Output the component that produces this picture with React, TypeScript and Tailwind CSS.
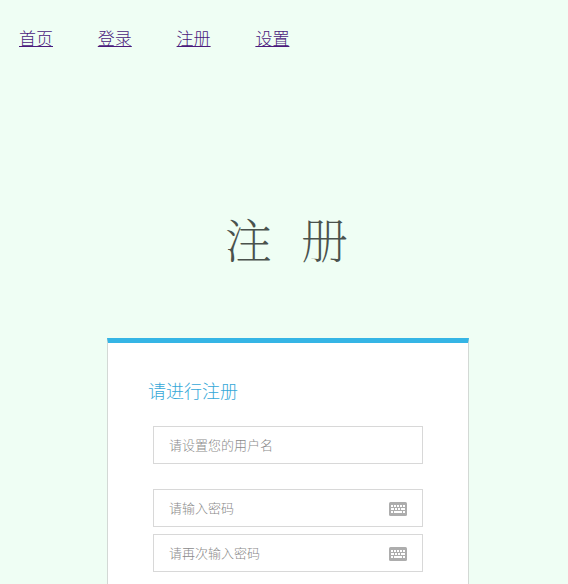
const navLinks = ["首页", "登录", "注册", "设置"];

function KeyboardIcon() {
  return (
    <svg className="mt-[2px]" width="18" height="14" viewBox="0 0 18 14">
      <rect width="18" height="14" rx="1.5" fill="#adadad" />
      <path
        d="M2 3h2v2H2zM5 3h2v2H5zM8 3h2v2H8zM11 3h2v2h-2zM14 3h2v2h-2zM2 6h3v2H2zM6 6h2v2H6zM9 6h2v2H9zM12 6h4v2h-4zM2 9h2v2H2zM5 9h8v2H5zM14 9h2v2h-2z"
        fill="#fff"
      />
    </svg>
  );
}

function Field({
  placeholder,
  type = "text",
}: {
  placeholder: string;
  type?: string;
}) {
  return (
    <div className="flex h-[38px] w-[270px] items-center border border-[#d8d8d8] bg-white px-[15px]">
      <input
        type={type}
        placeholder={placeholder}
        className="h-full min-w-0 grow text-[13px] font-light outline-none placeholder:text-[#8a8a8a]"
      />
      {type === "password" && <KeyboardIcon />}
    </div>
  );
}

export default function App() {
  return (
    <div className="h-[584px] overflow-hidden bg-[#effef4] font-['Liberation_Sans','Noto_Sans_CJK_SC',sans-serif]">
      <nav className="flex h-[76px] items-center gap-[44.8px] pt-[3px] pl-[19px]">
        {navLinks.map((link) => (
          <a
            key={link}
            href="#"
            className="w-[34px] text-[17px] leading-[24px] font-light whitespace-nowrap text-[#4b1a7c] underline decoration-1 underline-offset-[1px]"
          >
            {link}
          </a>
        ))}
      </nav>
      <h1 className="mt-[126px] flex h-[72px] items-center gap-[29px] pl-[225px] font-['Noto_Serif_CJK_SC','Noto_Sans_CJK_SC',serif] text-[47px] leading-[72px] font-extralight text-[#4a524d]">
        <span>注</span>
        <span>册</span>
      </h1>
      <form className="mt-[64px] ml-[107px] h-[300px] w-[362px] border-x border-t-[5px] border-x-[#d3d9d5] border-t-[#35b5e5] bg-white">
        <h2 className="mt-[37px] ml-[40px] h-[24px] text-[18px] leading-[24px] font-light text-[#35a8d8]">
          请进行注册
        </h2>
        <div className="mt-[22px] ml-[45px] flex flex-col">
          <Field placeholder="请设置您的用户名" />
          <div className="mt-[25px] flex flex-col gap-[7px]">
            <Field placeholder="请输入密码" type="password" />
            <Field placeholder="请再次输入密码" type="password" />
          </div>
        </div>
      </form>
    </div>
  );
}
